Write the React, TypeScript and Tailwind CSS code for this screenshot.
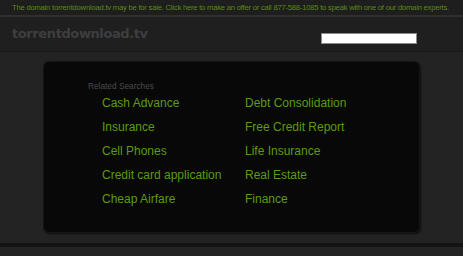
import React from 'react';

const LEFT = ['Cash Advance', 'Insurance', 'Cell Phones', 'Credit card application', 'Cheap Airfare'];
const RIGHT = ['Debt Consolidation', 'Free Credit Report', 'Life Insurance', 'Real Estate', 'Finance'];

export default function App() {
  return (
    <div className="w-full h-[256px] overflow-hidden bg-[#232323] font-['Liberation_Sans',Arial,sans-serif] flex flex-col">
      {/* Sale notice */}
      <div className="h-[15px] shrink-0 bg-[#1e1e1e] pl-[12px] text-[7.6px] leading-[15px] text-[#5a8a14] whitespace-nowrap tracking-[-0.2px]">
        The domain torrentdownload.tv may be for sale. Click here to make an offer or call 877-588-1085 to speak with one of our domain experts.
      </div>
      <div className="h-[2px] shrink-0 bg-[#2f2f2f]" />

      {/* Header */}
      <div className="h-[35px] shrink-0 bg-[#1f1f1f] flex items-center pl-[12px] pr-[46px] border-b border-[#1a1a1a]">
        <div className="font-['DejaVu_Sans',sans-serif] font-bold text-[13px] tracking-[-0.4px] text-[#3e3e3e] leading-none -mt-[1px]">
          torrentdownload.tv
        </div>
        <div className="ml-auto mt-[8px] w-[96px] h-[11px] bg-white border border-[#8a8a8a]" />
      </div>

      {/* Related searches */}
      <div className="flex-1 flex flex-col">
        <div className="ml-[43px] mt-[9px] w-[377px] h-[172px] rounded-[6px] bg-[#080808] border border-[#151515] shadow-[1px_1px_2px_rgba(0,0,0,0.6)] pl-[44px] pt-[19px]">
          <div className="h-[10px] text-[8.3px] leading-[10px] text-[#4a4a4a]">Related Searches</div>
          <div className="flex pl-[14px]">
            <div className="w-[143px] flex flex-col">
              {LEFT.map((t) => (
                <div key={t} className="h-[24px] leading-[24px] text-[12px] text-[#5c9c0c] whitespace-nowrap">{t}</div>
              ))}
            </div>
            <div className="flex flex-col">
              {RIGHT.map((t) => (
                <div key={t} className="h-[24px] leading-[24px] text-[12px] text-[#5c9c0c] whitespace-nowrap">{t}</div>
              ))}
            </div>
          </div>
        </div>
        <div className="mt-[10px] h-[4px] bg-[#141414]" />
      </div>
    </div>
  );
}
